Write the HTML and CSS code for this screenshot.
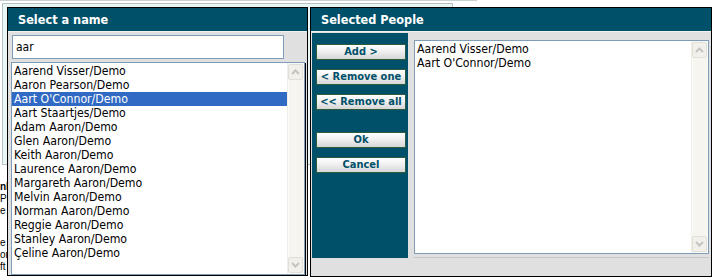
FILE: index.html
```html
<!DOCTYPE html>
<html>
<head>
<meta charset="utf-8">
<title>Select names</title>
<link rel="stylesheet" href="styles.css">
</head>
<body>
<div class="page">
  <div class="topline"></div>
  <div class="frame"></div>
  <div class="pagetext">
    <div class="pl b">nl</div>
    <div class="pl">Pc</div>
    <div class="pl">e</div>
    <div class="pl gap">e</div>
    <div class="pl">or</div>
    <div class="pl">ft</div>
  </div>

  <div class="dialog">
    <section class="panel pick">
      <div class="hdr">Select a name</div>
      <div class="pick-body">
        <div class="search">aar</div>
        <div class="listbox names">
          <ul class="items">
            <li>Aarend Visser/Demo</li>
            <li>Aaron Pearson/Demo</li>
            <li class="sel">Aart O'Connor/Demo</li>
            <li>Aart Staartjes/Demo</li>
            <li>Adam Aaron/Demo</li>
            <li>Glen Aaron/Demo</li>
            <li>Keith Aaron/Demo</li>
            <li>Laurence Aaron/Demo</li>
            <li>Margareth Aaron/Demo</li>
            <li>Melvin Aaron/Demo</li>
            <li>Norman Aaron/Demo</li>
            <li>Reggie Aaron/Demo</li>
            <li>Stanley Aaron/Demo</li>
            <li>Çeline Aaron/Demo</li>
          </ul>
          <div class="sbar">
            <span class="sbtn"><svg width="9" height="6" viewBox="0 0 9 6"><path d="M1 5 L4.5 1.5 L8 5" fill="none" stroke="#c4c4c0" stroke-width="2"/></svg></span>
            <span class="track"></span>
            <span class="sbtn"><svg width="9" height="6" viewBox="0 0 9 6"><path d="M1 1 L4.5 4.5 L8 1" fill="none" stroke="#c4c4c0" stroke-width="2"/></svg></span>
          </div>
        </div>
      </div>
    </section>

    <section class="panel chosen">
      <div class="hdr">Selected People</div>
      <div class="chosen-body">
        <div class="actions">
          <button class="btn">Add &gt;</button>
          <button class="btn">&lt; Remove one</button>
          <button class="btn">&lt;&lt; Remove all</button>
          <button class="btn spaced">Ok</button>
          <button class="btn">Cancel</button>
        </div>
        <div class="right-col">
          <div class="listbox picked">
            <ul class="items">
              <li>Aarend Visser/Demo</li>
              <li>Aart O'Connor/Demo</li>
            </ul>
            <div class="sbar">
              <span class="sbtn"><svg width="9" height="6" viewBox="0 0 9 6"><path d="M1 5 L4.5 1.5 L8 5" fill="none" stroke="#c4c4c0" stroke-width="2"/></svg></span>
              <span class="track"></span>
              <span class="sbtn"><svg width="9" height="6" viewBox="0 0 9 6"><path d="M1 1 L4.5 4.5 L8 1" fill="none" stroke="#c4c4c0" stroke-width="2"/></svg></span>
            </div>
          </div>
          <div class="rule"></div>
        </div>
      </div>
    </section>
  </div>
</div>
</body>
</html>
```

FILE: styles.css
```css
* { box-sizing: border-box; }
html, body { margin: 0; padding: 0; }
body {
  background: #ffffff;
  font-family: "DejaVu Sans Condensed", "DejaVu Sans", sans-serif;
  font-stretch: condensed;
  width: 712px;
  height: 277px;
  overflow: hidden;
}
.page { position: relative; width: 712px; height: 277px; }

.topline { width: 477px; height: 1px; background: #c9d2d2; }
.frame {
  margin: 2px 0 0 2px;
  width: 451px;
  height: 162px;
  border: 1px solid #b7c3c3;
  background: #eaf5f5;
}
.pagetext {
  margin: 16px 0 0 0;
  font-family: "Liberation Sans", sans-serif;
  font-size: 10px;
  line-height: 12px;
  color: #000;
}
.pl.b { font-weight: bold; }
.pl.gap { margin-top: 20px; }

.dialog {
  position: absolute;
  left: 7px;
  top: 7px;
  display: flex;
  gap: 2px;
}
.panel {
  border: 1px solid #000;
  background: #e0e0e0;
  display: flex;
  flex-direction: column;
}
.pick { width: 301px; height: 269px; }
.chosen { width: 402px; height: 270px; }

.hdr {
  height: 24px;
  line-height: 23px;
  background: #00506a;
  color: #ffffff;
  font-weight: bold;
  font-size: 12.6px;
  padding-left: 10px;
  border-bottom: 1px solid #f2f2f2;
}

.pick-body {
  flex: 1;
  display: flex;
  flex-direction: column;
  padding: 3px 3px 0 3px;
}
.search {
  margin-left: 1px;
  width: 272px;
  height: 24px;
  border: 1px solid #7f9db9;
  background: #fff;
  font-size: 12px;
  line-height: 22px;
  padding-left: 3px;
  color: #000;
}

.listbox {
  display: flex;
  background: #fff;
  border: 1px solid #7f9db9;
}
.names {
  margin-top: 3px;
  width: 294px;
  flex: 1;
  box-shadow: 1px 1px 0 #000;
}
.items {
  list-style: none;
  margin: 0;
  padding: 1px 0 0 0;
  flex: 1;
  font-size: 12.2px;
  line-height: 14px;
  color: #000;
}
.items li { padding-left: 2px; white-space: nowrap; }
.items li.sel { background: #316ac5; color: #fff; }

.sbar {
  width: 17px;
  display: flex;
  flex-direction: column;
  background: #f8f8f4;
  border-left: 1px solid #efefe9;
  padding: 1px 1px 1px 0;
}
.sbtn {
  height: 16px;
  display: flex;
  align-items: center;
  justify-content: center;
  background: #f1f0ea;
  border: 1px solid #e2e0d6;
  border-radius: 2px;
}
.track { flex: 1; background: #f6f5f0; border-left: 1px solid #fbfbf9; }

.chosen-body {
  flex: 1;
  display: flex;
  padding: 1px 0 0 1px;
}
.actions {
  width: 96px;
  height: 225px;
  background: #00506a;
  display: flex;
  flex-direction: column;
  gap: 9px;
  padding: 11px 0 0 4px;
}
.btn {
  width: 90px;
  height: 16px;
  padding: 0;
  margin: 0;
  border: 1px solid #2f5c3c;
  background: linear-gradient(#ffffff, #f0f0f0 45%, #d6d6d6);
  color: #00506a;
  font-family: "DejaVu Sans Condensed", "DejaVu Sans", sans-serif;
  font-stretch: condensed;
  font-weight: bold;
  font-size: 11px;
  line-height: 14px;
  text-align: center;
}
.btn.spaced { margin-top: 13px; }

.right-col {
  display: flex;
  flex-direction: column;
  margin: 7px 0 0 6px;
}
.picked {
  width: 295px;
  height: 214px;
}
.rule {
  margin-top: 3px;
  width: 295px;
  height: 1px;
  background: #c6c6c6;
}
```
